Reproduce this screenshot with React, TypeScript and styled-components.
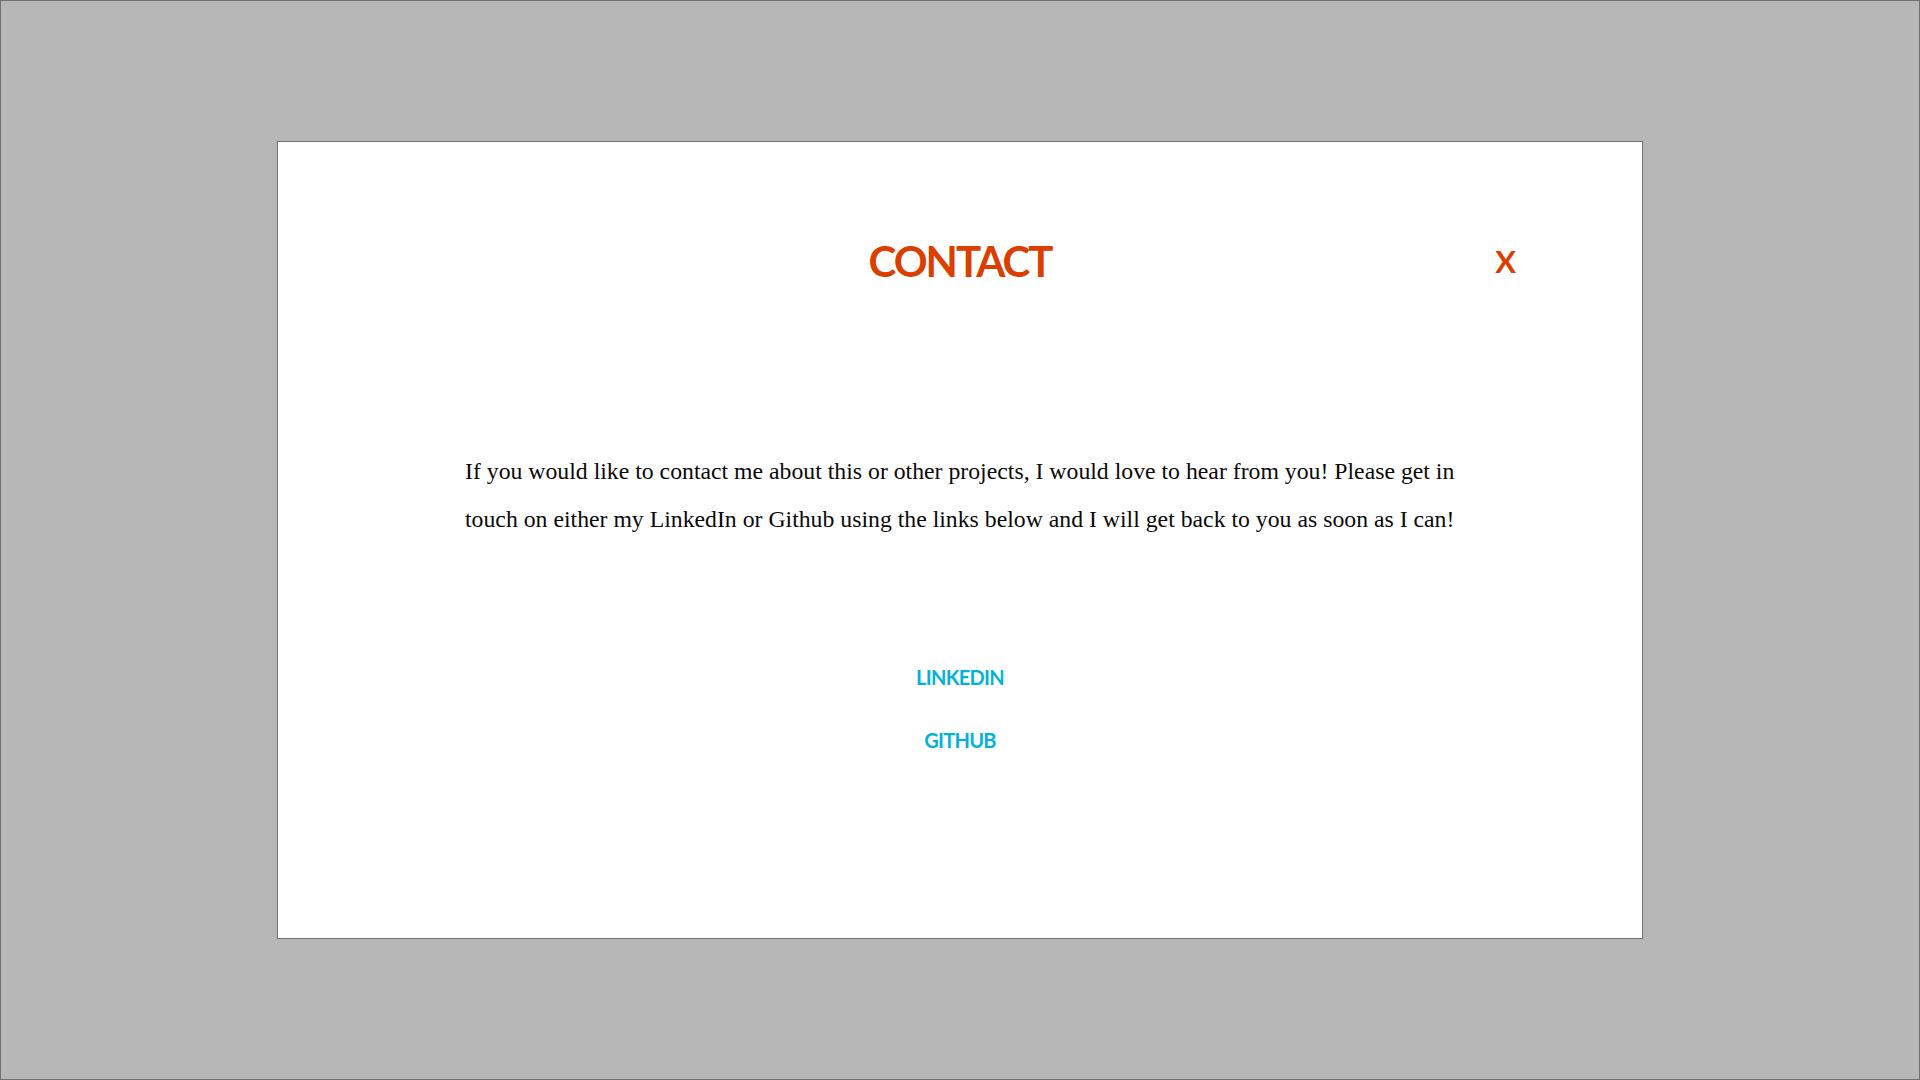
import React from 'react';
import styled, { createGlobalStyle } from 'styled-components';

const GlobalStyle = createGlobalStyle`
  html,
  body {
    margin: 0;
    padding: 0;
  }
  * {
    box-sizing: border-box;
  }
`;

const Overlay = styled.div`
  width: 100vw;
  height: 100vh;
  background: #b7b7b7;
  border: 1px solid #707070;
  display: flex;
  align-items: center;
  justify-content: center;
`;

const Modal = styled.section`
  width: 1366px;
  height: 798px;
  background: #ffffff;
  border: 1px solid #707070;
  display: flex;
  flex-direction: column;
  align-items: center;
  padding-top: 98px;
`;

const Header = styled.header`
  width: 100%;
  padding: 0 126px;
  display: grid;
  grid-template-columns: 1fr auto 1fr;
  align-items: center;
`;

const Title = styled.h1`
  grid-column: 2;
  margin: 0;
  font-family: Lato, 'Noto Sans', sans-serif;
  font-weight: 700;
  font-size: 42px;
  line-height: 1;
  letter-spacing: -2px;
  color: #db3f00;
`;

const CloseButton = styled.button`
  grid-column: 3;
  justify-self: end;
  padding: 0;
  border: none;
  background: none;
  cursor: pointer;
  font-family: Lato, 'Noto Sans', sans-serif;
  font-weight: 700;
  font-size: 31px;
  line-height: 1;
  color: #db3f00;
`;

const Message = styled.p`
  width: 990px;
  margin: 165px 0 0;
  font-family: 'Liberation Serif', 'Times New Roman', serif;
  font-size: 23.75px;
  line-height: 48px;
  color: #0a0a0a;
  text-align: left;
`;

const Links = styled.nav`
  margin-top: 124px;
  display: flex;
  flex-direction: column;
  align-items: center;
  gap: 43px;
`;

const SocialLink = styled.a`
  font-family: Lato, 'Noto Sans', sans-serif;
  font-weight: 700;
  font-size: 20px;
  line-height: 1;
  letter-spacing: -0.7px;
  color: #04b2d9;
  text-decoration: none;
`;

const links = [
  { label: 'LINKEDIN', href: '#linkedin' },
  { label: 'GITHUB', href: '#github' },
];

const App = () => {
  return (
    <>
      <GlobalStyle />
      <Overlay>
        <Modal aria-label="Contact">
          <Header>
            <Title>CONTACT</Title>
            <CloseButton aria-label="Close contact">X</CloseButton>
          </Header>
          <Message>
            If you would like to contact me about this or other projects, I
            would love to hear from you! Please get in touch on either my
            LinkedIn or Github using the links below and I will get back to you
            as soon as I can!
          </Message>
          <Links>
            {links.map((link) => (
              <SocialLink key={link.label} href={link.href}>
                {link.label}
              </SocialLink>
            ))}
          </Links>
        </Modal>
      </Overlay>
    </>
  );
};

export default App;
